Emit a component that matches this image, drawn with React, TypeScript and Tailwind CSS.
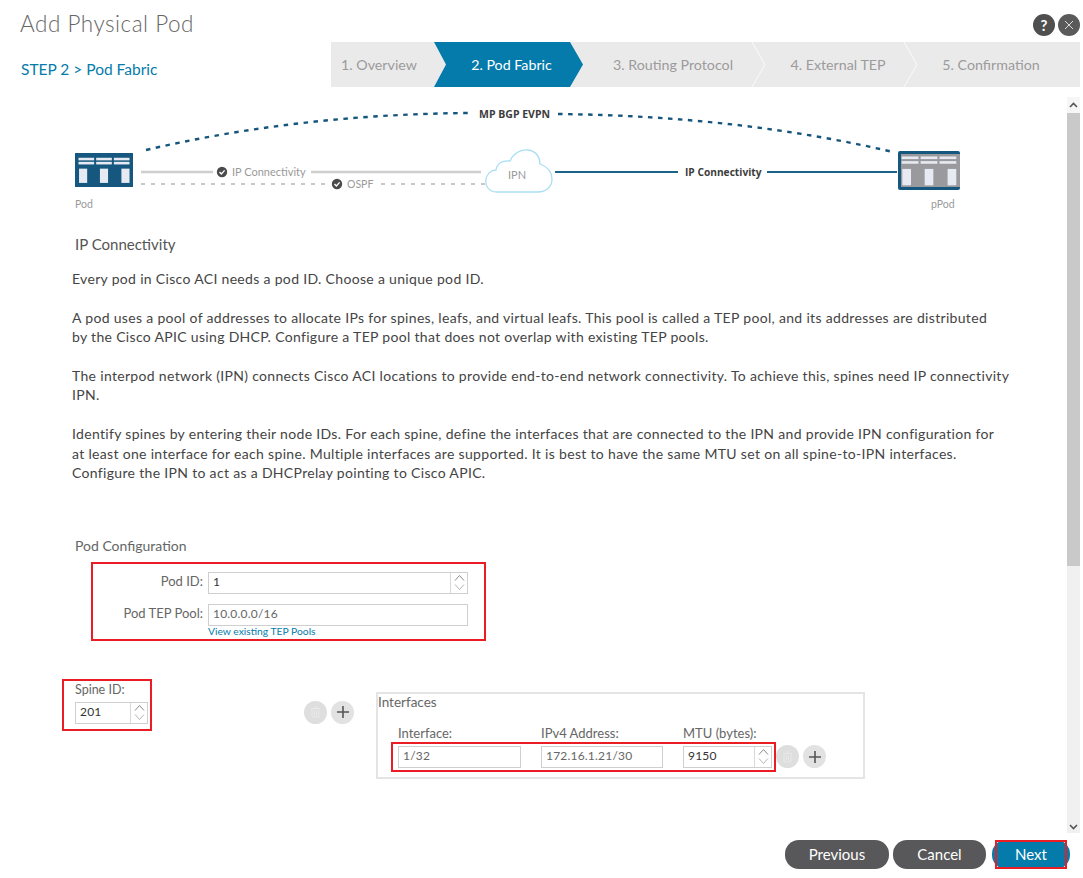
import React from "react";

const fontClass = "font-['Lato','Open_Sans',sans-serif]";

function Spinner({ className = "" }: { className?: string }) {
  return (
    <div className={`flex w-[17px] shrink-0 flex-col items-center justify-center border-l border-[#d8d8d8] ${className}`}>
      <svg width="11" height="8" viewBox="0 0 11 8" fill="none"><path d="M1 6.5 5.5 1.5 10 6.5" stroke="#8a8a8a" strokeWidth="1" /></svg>
      <svg width="11" height="8" viewBox="0 0 11 8" fill="none" className="mt-[1px]"><path d="M1 1.5 5.5 6.5 10 1.5" stroke="#b5b5b5" strokeWidth="1" /></svg>
    </div>
  );
}

function Field({ value, spin = false, className = "", textClass = "text-[#666]" }: { value: string; spin?: boolean; className?: string; textClass?: string }) {
  return (
    <div className={`flex h-[22px] items-stretch border border-[#cfcfcf] bg-white ${className}`}>
      <span className={`flex flex-1 items-center pb-[1px] pl-[4px] text-[12px] tracking-[0.2px] ${textClass}`}>{value}</span>
      {spin && <Spinner />}
    </div>
  );
}

function RoundActions({ className = "" }: { className?: string }) {
  return (
    <div className={`flex items-center gap-[4px] ${className}`}>
      <div className="flex h-[23px] w-[23px] items-center justify-center rounded-full bg-[#dedede]">
        <svg width="11" height="12" viewBox="0 0 11 12" fill="none">
          <path d="M1 2.5h9M2 3v8h7V3M4 1h3M4.5 4.5v5M6.5 4.5v5" stroke="#e8e8e8" strokeWidth="1" />
        </svg>
      </div>
      <div className="flex h-[23px] w-[23px] items-center justify-center rounded-full bg-[#e2e2e2]">
        <svg width="14" height="14" viewBox="0 0 14 14" fill="none">
          <path d="M7 1v12M1 7h12" stroke="#555" strokeWidth="1.6" />
        </svg>
      </div>
    </div>
  );
}

function Check({ cx, cy }: { cx: number; cy: number }) {
  return (
    <g>
      <circle cx={cx} cy={cy} r="5.2" fill="#4a4a4a" />
      <path d={`M${cx - 2.5} ${cy} l1.9 2 l3.2 -3.6`} stroke="#fff" strokeWidth="1.4" fill="none" />
    </g>
  );
}

function PodIcon({ x, y, w, h, body, border }: { x: number; y: number; w: number; h: number; body: string; border?: string }) {
  const cols = [0.06, 0.365, 0.67];
  const colW = 0.27;
  return (
    <g>
      <rect x={x} y={y} width={w} height={h} fill={border ?? body} rx={border ? 2 : 0} />
      {border && <rect x={x + 3} y={y + 3} width={w - 3} height={h - 6} fill={body} />}
      {cols.map((c) => (
        <g key={c}>
          <rect x={x + w * c} y={y + h * 0.14} width={w * colW} height={2.6} fill="#e7eaf2" />
          <rect x={x + w * c} y={y + h * 0.26} width={w * colW} height={2.6} fill="#e7eaf2" />
        </g>
      ))}
      {[0.07, 0.43, 0.8].map((c) => (
        <rect key={c} x={x + w * c} y={y + h * 0.46} width={w * 0.14} height={h * 0.42} fill="#e7eaf2" />
      ))}
    </g>
  );
}

function Diagram() {
  return (
    <svg width="1060" height="118" viewBox="0 97 1060 118" className="block shrink-0">
      <path d="M146 150 Q 300 114 472 113" fill="none" stroke="#17567c" strokeWidth="2.4" strokeDasharray="4.5 5.5" />
      <path d="M558 114 Q 740 116 893 152" fill="none" stroke="#17567c" strokeWidth="2.4" strokeDasharray="4.5 5.5" />
      <text x="479" y="118" fontSize="10.5" fontWeight="700" fill="#3c3c3c" fontFamily="'Open Sans',sans-serif">MP BGP EVPN</text>

      <PodIcon x={75} y={153} w={58} h={34} body="#15577e" />
      <text x="75" y="208" fontSize="10.5" fill="#9a9a9a">Pod</text>

      <line x1="141" y1="172" x2="213" y2="172" stroke="#cfcfcf" strokeWidth="2.6" />
      <Check cx={222} cy={172} />
      <text x="232" y="176" fontSize="11" fill="#9a9a9a">IP Connectivity</text>
      <line x1="311" y1="172" x2="481" y2="172" stroke="#cfcfcf" strokeWidth="2.6" />

      <line x1="141" y1="184" x2="326" y2="184" stroke="#c8c8c8" strokeWidth="2" strokeDasharray="4 6" />
      <Check cx={337} cy={184} />
      <text x="347" y="188" fontSize="10.5" fill="#9a9a9a">OSPF</text>
      <line x1="381" y1="184" x2="486" y2="184" stroke="#c8c8c8" strokeWidth="2" strokeDasharray="4 6" />

      <path
        d="M497 192 C488 192 485 185 486 179 C487 174 491 170 496 170 C497 163 503 160 510 161 C513 154 520 149 528 150 C536 151 540 157 540 164 C548 167 552 173 552 179 C552 187 546 192 538 192 Z"
        fill="#fff"
        stroke="#a9def4"
        strokeWidth="1.3"
      />
      <text x="517" y="179" fontSize="11" fill="#9a9a9a" textAnchor="middle">IPN</text>

      <line x1="555" y1="172" x2="678" y2="172" stroke="#1b6487" strokeWidth="2" />
      <text x="685" y="176" fontSize="10.2" fontWeight="700" fill="#3c3c3c" fontFamily="'Open Sans',sans-serif">IP Connectivity</text>
      <line x1="767" y1="172" x2="897" y2="172" stroke="#1b6487" strokeWidth="2" />

      <PodIcon x={898} y={151} w={62} h={39} body="#9a9a9e" border="#15577e" />
      <text x="931" y="208" fontSize="10.5" fill="#9a9a9a">pPod</text>
    </svg>
  );
}

const steps = [
  { label: "1. Overview", w: "w-[103px]", pad: "pr-[7px]" },
  { label: "2. Pod Fabric", w: "w-[149px]", pad: "pl-[6px]", active: true },
  { label: "3. Routing Protocol", w: "w-[170px]", pad: "pl-[10px]" },
  { label: "4. External TEP", w: "w-[152px]", pad: "pl-[18px]" },
  { label: "5. Confirmation", w: "w-[175px]", pad: "pr-[3px]" },
];

function Wizard() {
  return (
    <div className="relative flex h-[45px] w-[749px] bg-[#ebeaeb]">
      {steps.map((s, i) => (
        <div
          key={s.label}
          className={`relative flex h-full items-center justify-center text-[14.25px] ${s.w} ${s.active ? "z-10 text-white" : "text-[#9b9b9b]"}`}
        >
          {s.active && (
            <div className="absolute inset-y-0 left-0 w-[149px] bg-[#047bab] [clip-path:polygon(0_0,136px_0,149px_50%,136px_100%,0_100%,12px_50%)]" />
          )}
          <span className={`relative ${s.pad}`}>{s.label}</span>
          {i >= 2 && i < 4 && (
            <svg width="14" height="45" viewBox="0 0 14 45" fill="none" className="absolute right-[-13px] top-0 z-[5]">
              <path d="M0 0 13 22.5 0 45" stroke="#fafafa" strokeWidth="1" />
            </svg>
          )}
        </div>
      ))}
    </div>
  );
}

function Footer() {
  const base = "flex h-[29px] items-center justify-center rounded-[14px] text-[15px] text-white";
  return (
    <div className="flex h-[44px] items-start justify-end pr-[13px] pt-[6px]">
      <div className={`${base} mr-[4px] w-[104px] bg-[#58585a]`}>Previous</div>
      <div className={`${base} mr-[6px] w-[93px] bg-[#58585a]`}>Cancel</div>
      <div className={`${base} relative w-[78px] bg-[#047bab]`}>
        Next
        <div className="absolute inset-y-0 left-[3px] right-[3px] border-2 border-[#ea1c24]" />
      </div>
    </div>
  );
}

function Scrollbar() {
  return (
    <div className="mt-[10px] flex h-[736px] w-[13px] flex-col bg-[#f0f0f0]">
      <div className="flex h-[16px] items-center justify-center bg-[#f6f6f6]">
        <svg width="9" height="6" viewBox="0 0 9 6" fill="none"><path d="M1 5 4.5 1.5 8 5" stroke="#555" strokeWidth="1.6" /></svg>
      </div>
      <div className="h-[453px] bg-[#c9c9c9]" />
      <div className="flex-1" />
      <div className="flex h-[12px] items-center justify-center">
        <svg width="9" height="6" viewBox="0 0 9 6" fill="none"><path d="M1 1 4.5 4.5 8 1" stroke="#555" strokeWidth="1.6" /></svg>
      </div>
    </div>
  );
}

export default function App() {
  return (
    <div className={`flex h-[878px] w-[1083px] flex-col overflow-hidden bg-white text-[#444] ${fontClass}`}>
      <div className="flex h-[42px] items-start justify-between pl-[20px] pr-[3px] pt-[10px]">
        <h1 className="text-[22.5px] font-light leading-[28px] tracking-[0.5px] text-[#666]">Add Physical Pod</h1>
        <div className="mt-[4px] flex gap-[3px]">
          <div className="flex h-[22px] w-[22px] items-center justify-center rounded-full bg-[#4f4f4f] text-[15px] font-bold text-white">?</div>
          <div className="flex h-[22px] w-[22px] items-center justify-center rounded-full bg-[#5a5a5a]">
            <svg width="10" height="10" viewBox="0 0 10 10" fill="none"><path d="M1 1l8 8M9 1l-8 8" stroke="#ddd" strokeWidth="1" /></svg>
          </div>
        </div>
      </div>

      <div className="flex h-[45px]">
        <div className="flex w-[331px] items-center pl-[21px] pt-[10px] text-[15.5px] text-[#047bab]">STEP 2 &gt; Pod Fabric</div>
        <Wizard />
      </div>

      <div className="flex h-[747px]">
        <div className="w-[1067px] shrink-0">
          <div className="h-[10px]" />
          <Diagram />

          <h2 className="ml-[75px] mt-[18px] text-[15px] leading-[22px] text-[#555]">IP Connectivity</h2>
          <div className="ml-[72px] mt-[14px] w-[960px] space-y-[19px] whitespace-nowrap text-[14px] leading-[19.6px] tracking-[0.32px] text-[#444]">
            <p>Every pod in Cisco ACI needs a pod ID. Choose a unique pod ID.</p>
            <p>A pod uses a pool of addresses to allocate IPs for spines, leafs, and virtual leafs. This pool is called a TEP pool, and its addresses are distributed<br />by the Cisco APIC using DHCP. Configure a TEP pool that does not overlap with existing TEP pools.</p>
            <p>The interpod network (IPN) connects Cisco ACI locations to provide end-to-end network connectivity. To achieve this, spines need IP connectivity<br />IPN.</p>
            <p>Identify spines by entering their node IDs. For each spine, define the interfaces that are connected to the IPN and provide IPN configuration for<br />at least one interface for each spine. Multiple interfaces are supported. It is best to have the same MTU set on all spine-to-IPN interfaces.<br />Configure the IPN to act as a DHCPrelay pointing to Cisco APIC.</p>
          </div>

          <h3 className="ml-[75px] mt-[53px] text-[14px] leading-[20px] text-[#666]">Pod Configuration</h3>
          <div className="ml-[91px] mt-[6px] h-[79px] w-[395px] border-2 border-[#ea1c24] pl-[115px] pt-[8px]">
            <div className="relative h-[22px] w-[260px]">
              <span className="absolute right-full top-0 whitespace-nowrap pr-[5px] text-[13px] leading-[18px] text-[#666]">Pod ID:</span>
              <Field value="1" spin className="w-[260px]" textClass="text-[#333]" />
            </div>
            <div className="relative mt-[10px] h-[22px] w-[260px]">
              <span className="absolute right-full top-0 whitespace-nowrap pr-[5px] text-[13px] leading-[18px] text-[#666]">Pod TEP Pool:</span>
              <Field value="10.0.0.0/16" className="w-[260px]" />
            </div>
            <a className="block text-[10.3px] leading-[11px] text-[#047bab]">View existing TEP Pools</a>
          </div>

          <div className="mt-[38px] flex items-start">
            <div className="ml-[62px] h-[52px] w-[90px] border-2 border-[#ea1c24] pl-[11px]">
              <div className="text-[12.5px] leading-[17px] text-[#666]">Spine ID:</div>
              <Field value="201" spin className="mt-[4px] w-[73px]" textClass="text-[#333]" />
            </div>
            <RoundActions className="ml-[152px] mt-[22px]" />
            <fieldset className="ml-[22px] mt-[13px] h-[87px] w-[489px] border-2 border-[#e4e4e4]">
              <div className="text-[13.5px] leading-[16px] text-[#666]">Interfaces</div>
              <div className="mt-[16px] flex text-[13px] leading-[14px] text-[#666]">
                <span className="ml-[20px] w-[143px]">Interface:</span>
                <span className="w-[142px]">IPv4 Address:</span>
                <span>MTU (bytes):</span>
              </div>
              <div className="mt-[2px] flex items-center">
                <div className="ml-[13px] flex h-[30px] w-[385px] items-center border-2 border-[#ea1c24] pl-[5px]">
                  <Field value="1/32" className="w-[123px]" />
                  <Field value="172.16.1.21/30" className="ml-[20px] w-[122px]" />
                  <Field value="9150" spin className="ml-[20px] w-[89px]" textClass="text-[#333]" />
                </div>
                <RoundActions />
              </div>
            </fieldset>
          </div>
        </div>
        <Scrollbar />
      </div>

      <Footer />
    </div>
  );
}
